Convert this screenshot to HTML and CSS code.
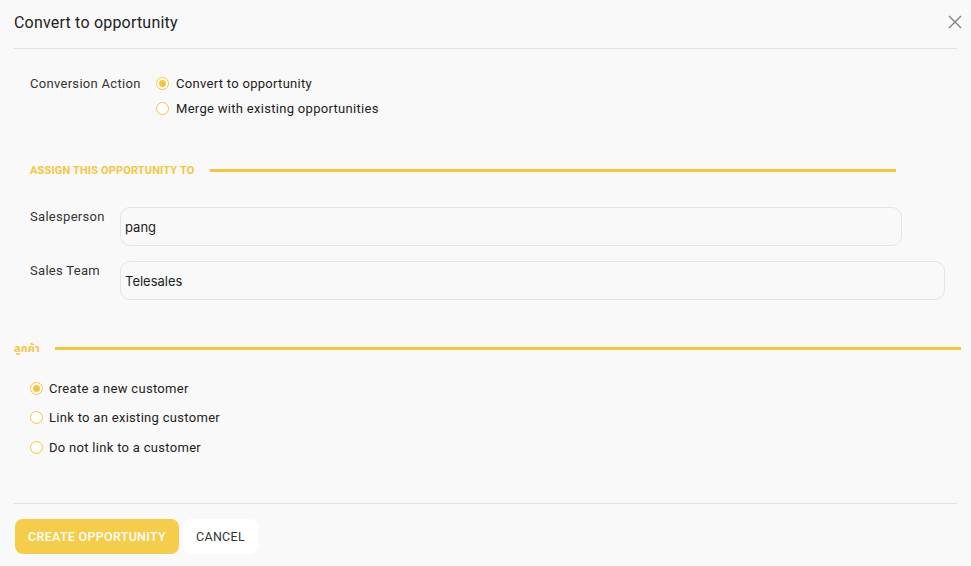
FILE: index.html
```html
<!DOCTYPE html>
<html>
<head>
<meta charset="utf-8">
<link rel="stylesheet" href="styles.css">
</head>
<body>
<div class="modal">
  <div class="header">
    <div class="title">Convert to opportunity</div>
    <svg class="close" width="14" height="14" viewBox="0 0 14 14"><path d="M1 1L13 13M13 1L1 13" stroke="#808080" stroke-width="1.4" fill="none"/></svg>
  </div>
  <div class="body">
    <div class="conv">
      <div class="conv-label">Conversion Action</div>
      <div class="radios">
        <div class="radio-row"><span class="radio checked"></span><span>Convert to opportunity</span></div>
        <div class="radio-row"><span class="radio"></span><span>Merge with existing opportunities</span></div>
      </div>
    </div>
    <div class="section-head assign">
      <span class="section-title">ASSIGN THIS OPPORTUNITY TO</span>
      <span class="section-line line-assign"></span>
    </div>
    <div class="field first">
      <div class="field-label">Salesperson</div>
      <div class="input input-short">pang</div>
    </div>
    <div class="field second">
      <div class="field-label">Sales Team</div>
      <div class="input input-long">Telesales</div>
    </div>
  </div>
  <div class="section-head customer">
    <span class="section-title thai">ลูกค้า</span>
    <span class="section-line line-customer"></span>
  </div>
  <div class="cust-radios">
    <div class="radio-row"><span class="radio checked"></span><span>Create a new customer</span></div>
    <div class="radio-row"><span class="radio"></span><span>Link to an existing customer</span></div>
    <div class="radio-row"><span class="radio"></span><span>Do not link to a customer</span></div>
  </div>
  <div class="footer">
    <button class="btn btn-primary">CREATE OPPORTUNITY</button>
    <button class="btn btn-secondary">CANCEL</button>
  </div>
</div>
</body>
</html>
```
FILE: styles.css
```css
html, body {
  margin: 0;
  padding: 0;
  background: #f9f9f9;
}
.modal {
  width: 971px;
  height: 566px;
  box-sizing: border-box;
  padding: 0 14px;
  background: #f9f9f9;
  font-family: Roboto, "Noto Sans", sans-serif;
  color: #222;
  overflow: hidden;
}
.header {
  height: 49px;
  box-sizing: border-box;
  border-bottom: 1px solid #e2e2e2;
  display: flex;
  justify-content: space-between;
  align-items: flex-start;
  padding-top: 14px;
}
.title {
  font-size: 16px;
  line-height: 18px;
  letter-spacing: 0.2px;
  color: #222;
}
.close {
  margin-top: 1px;
  margin-right: -5px;
}
.body {
  padding-left: 16px;
}
.conv {
  margin-top: 22px;
  display: flex;
}
.conv-label {
  width: 126px;
  font-size: 13px;
  line-height: 25px;
  letter-spacing: 0.3px;
  color: #333;
}
.radios {
  display: flex;
  flex-direction: column;
}
.radio-row {
  display: flex;
  align-items: center;
  gap: 7px;
  font-size: 13px;
  letter-spacing: 0.3px;
  height: 25px;
  color: #222;
}
.radio {
  width: 13px;
  height: 13px;
  box-sizing: border-box;
  border: 1px solid #f5c63c;
  border-radius: 50%;
  background: #fff;
  position: relative;
  flex: none;
}
.radio.checked::after {
  content: "";
  position: absolute;
  left: 2px;
  top: 2px;
  width: 7px;
  height: 7px;
  border-radius: 50%;
  background: #f5c63c;
}
.section-head {
  display: flex;
  align-items: center;
  height: 16px;
}
.section-title {
  font-size: 11px;
  font-weight: 700;
  color: #f5c63c;
  letter-spacing: 0.15px;
  flex: none;
}
.section-line {
  height: 3px;
  background: #f5c63c;
  flex: none;
}
.assign {
  margin-top: 41px;
}
.line-assign {
  margin-left: 16px;
  width: 686px;
}
.field {
  display: flex;
}
.field.first {
  margin-top: 29px;
}
.field.second {
  margin-top: 15px;
}
.field-label {
  width: 90px;
  font-size: 13px;
  line-height: 16px;
  letter-spacing: 0.3px;
  padding-top: 2px;
  color: #333;
}
.input {
  height: 39px;
  box-sizing: border-box;
  border: 1px solid #e4e4ef;
  border-radius: 10px;
  background: #f9f9f9;
  padding-left: 4px;
  display: flex;
  align-items: center;
  font-family: Inter, Roboto, sans-serif;
  font-size: 13px;
  color: #222;
}
.input-short {
  width: 782px;
}
.input-long {
  width: 825px;
}
.customer {
  margin-top: 40px;
  margin-right: -14px;
}
.thai {
  font-family: "Noto Sans Thai", "Noto Sans", sans-serif;
}
.line-customer {
  margin-left: 15px;
  width: 906px;
}
.cust-radios {
  margin-top: 20px;
  padding-left: 16px;
  display: flex;
  flex-direction: column;
  gap: 5.5px;
}
.cust-radios .radio-row {
  height: 24px;
  gap: 6px;
}
.footer {
  margin-top: 44px;
  border-top: 1px solid #e2e2e2;
  padding-top: 15px;
  padding-left: 1px;
  display: flex;
  gap: 4px;
}
.btn {
  height: 35px;
  border: none;
  border-radius: 8px;
  font-family: Roboto, sans-serif;
  font-size: 12.5px;
  font-weight: 500;
  letter-spacing: 0.3px;
  padding: 0;
  cursor: pointer;
}
.btn-primary {
  background: #f6cd4a;
  color: #fff;
  width: 164px;
}
.btn-secondary {
  background: #fff;
  color: #333;
  font-weight: 400;
  width: 75px;
}
```
